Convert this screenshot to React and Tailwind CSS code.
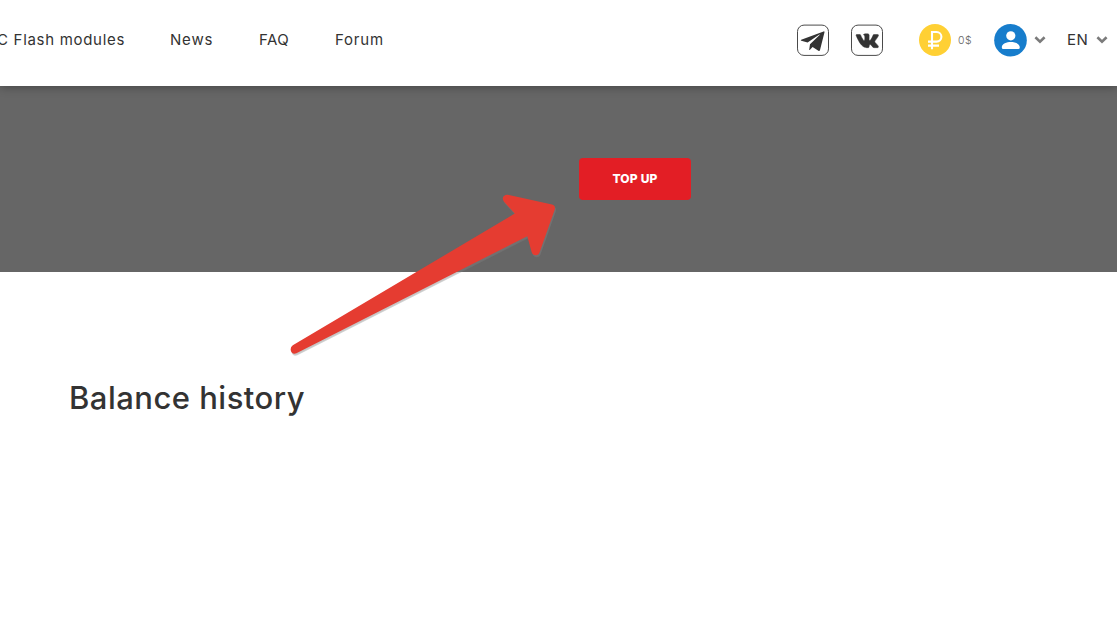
function Chevron() {
  return (
    <svg viewBox="0 0 12 8" className="h-2 w-3" fill="none" stroke="#7b7b7b" strokeWidth="2.6">
      <path d="M1.4 1.3 6 5.7 10.6 1.3" />
    </svg>
  );
}

function Telegram() {
  return (
    <svg viewBox="0 0 32 32" className="size-8">
      <rect x="0.5" y="1.1" width="31" height="30.3" rx="6.5" fill="#fff" stroke="#4a4a4a" />
      <path
        fill="#333"
        d="M26.6 7.4 4.2 15.7q-1 .7.1 1.1l6.3 1.8L22.4 10.6q.8-.3.2.4l-9.6 9.3-.8 5.4q.4.4.8 0l2.6-2.6 5.8 3.6q1.2.6 1.6-.7L27.5 8.3q.1-1.1-.9-.9z"
      />
    </svg>
  );
}

function Vk() {
  return (
    <svg viewBox="0 0 32 32" className="size-8">
      <rect x="0.5" y="1.1" width="31" height="30.3" rx="6.5" fill="#fff" stroke="#4a4a4a" />
      <path
        fill="#333"
        stroke="#333"
        strokeWidth=".5"
        transform="translate(4.2 5) scale(.96 1.03)"
        d="M12.25 18.1h1.4s.42-.05.64-.28c.2-.21.2-.62.2-.62s-.03-1.88.85-2.16c.86-.27 1.97 1.82 3.14 2.62.89.61 1.56.48 1.56.48l3.14-.04s1.64-.1.86-1.4c-.06-.1-.45-.95-2.33-2.7-1.96-1.82-1.7-1.53.67-4.68 1.44-1.92 2.01-3.1 1.83-3.6-.17-.48-1.23-.35-1.23-.35l-3.53.02s-.26-.04-.46.08c-.19.11-.31.37-.31.37s-.56 1.49-1.3 2.75c-1.57 2.67-2.2 2.81-2.46 2.64-.6-.38-.45-1.55-.45-2.38 0-2.59.4-3.67-.76-3.95-.39-.1-.67-.16-1.65-.17-1.26-.01-2.33.01-2.93.3-.4.2-.71.64-.52.67.23.03.76.14 1.04.52.36.5.35 1.6.35 1.6s.2 3.06-.49 3.44c-.47.26-1.12-.27-2.51-2.68-.72-1.24-1.26-2.6-1.26-2.6s-.1-.26-.29-.4c-.22-.16-.54-.21-.54-.21L1.65 5.4s-.5.01-.69.24c-.16.2-.01.6-.01.6s2.63 6.16 5.6 9.26c2.74 2.85 5.7 2.6 5.7 2.6z"
      />
    </svg>
  );
}

function Ruble() {
  return (
    <svg viewBox="0 0 32 32" className="size-8">
      <circle cx="16" cy="16" r="16" fill="#ffd034" />
      <path
        fill="none"
        stroke="#fff"
        strokeWidth="2.1"
        d="M13 25.2V8H17.6a4.8 4.8 0 0 1 0 9.6H9M9 21.6h11"
      />
    </svg>
  );
}

function Avatar() {
  return (
    <svg viewBox="0 0 33 33" className="h-[33px] w-[33px]">
      <circle cx="16.5" cy="16.3" r="16.3" fill="#177dcc" />
      <circle cx="16.8" cy="11.8" r="4.6" fill="#fff" />
      <path fill="#fff" d="M7.8 23.5c0-4 5-5.5 9-5.5s9 1.5 9 5.5q0 1.6-1.5 1.6h-15q-1.5 0-1.5-1.6z" />
    </svg>
  );
}

function Arrow() {
  return (
    <svg
      viewBox="285 190 280 170"
      className="pointer-events-none absolute left-[285px] top-[190px] h-[170px] w-[280px]"
    >
      <defs>
        <filter id="arrow-shadow" x="-5%" y="-5%" width="110%" height="115%" colorInterpolationFilters="sRGB">
          <feDropShadow dx="1" dy="1.8" stdDeviation="0.5" floodColor="#808080" floodOpacity="0.45" />
        </filter>
      </defs>
      <path
        filter="url(#arrow-shadow)"
        fill="#e53c31"
        d="M292.8 345.3 514.8 213.6 504 201.8Q501.5 198 504 196Q505.7 194.3 509 195L552 204.4Q556 205.7 554.6 210L539.7 252Q538.5 255.3 535.8 255.2Q532.7 255.2 531.6 252L527.3 236.2 296.4 353.3Q293.5 354.6 291.5 352.2Q289.3 348 292.8 345.3Z"
      />
    </svg>
  );
}

export default function App() {
  return (
    <div className="relative h-[644px] w-full overflow-hidden bg-white font-['Inter','Liberation_Sans',sans-serif] text-[#333]">
      <header className="relative flex h-[86px] items-start justify-between bg-white pt-6 shadow-[0_0_10px_rgba(0,0,0,0.4)]">
        <nav className="-ml-[3px] flex h-8 items-center whitespace-nowrap text-[15px] leading-8">
          <a className="w-[173px] tracking-[0.7px]">C Flash modules</a>
          <a className="w-[89px] tracking-[0.8px]">News</a>
          <a className="w-[76px] tracking-[0.5px]">FAQ</a>
          <a className="tracking-[0.8px]">Forum</a>
        </nav>
        <div className="flex h-8 items-center pr-[9px]">
          <Telegram />
          <div className="ml-[22px]"><Vk /></div>
          <div className="ml-9"><Ruble /></div>
          <span className="ml-[7px] w-9 pt-px text-[10.5px] font-light tracking-[0.6px] text-[#666]">0$</span>
          <Avatar />
          <div className="ml-[7px]"><Chevron /></div>
          <span className="ml-[21px] w-[29px] text-[15px] tracking-[0.5px]">EN</span>
          <Chevron />
        </div>
      </header>
      <section className="flex h-[186px] items-center bg-[#666] pl-[579px]">
        <button className="h-[42px] w-28 rounded bg-[#e31e25] text-[12px] font-extrabold tracking-[0.2px] text-white">
          TOP UP
        </button>
      </section>
      <main className="pl-[69px] pt-[106px]">
        <h1 className="whitespace-nowrap text-[31px] font-medium leading-10 tracking-[0.48px]">Balance history</h1>
      </main>
      <Arrow />
    </div>
  );
}
